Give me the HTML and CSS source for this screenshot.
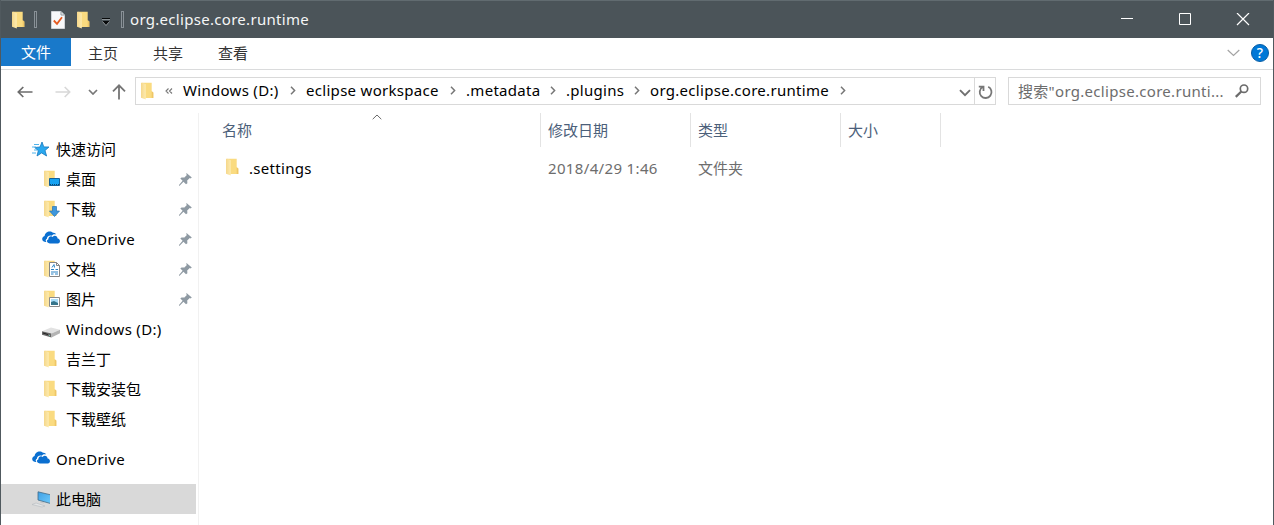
FILE: index.html
```html
<!DOCTYPE html>
<html lang="zh-CN">
<head>
<meta charset="utf-8">
<title>org.eclipse.core.runtime</title>
<link rel="stylesheet" href="styles.css">
</head>
<body>
<svg class="defs" width="0" height="0" aria-hidden="true">
  <linearGradient id="gold" x1="0" x2="1"><stop offset="0" stop-color="#f5d78a"/><stop offset="1" stop-color="#fdebb0"/></linearGradient>
  <linearGradient id="screen" x1="0" y1="0" x2="1" y2="1"><stop offset="0" stop-color="#3f9fe4"/><stop offset="1" stop-color="#6cc9fb"/></linearGradient>
  <symbol id="folder" viewBox="0 0 18 18">
    <path d="M1 .7h9.700v8.500l1.600 1.300V16H2z" fill="#fadb80"/>
    <path d="M0 .7h1.200l3.600 1.600v15.200L3.500 17 0 15.800z" fill="url(#gold)"/>
    <path d="M10.700 9.300l1.600 1.200V16h-1.600z" fill="#efc667"/>
  </symbol>
  <symbol id="cloud" viewBox="0 0 18 13">
    <path d="M4.500 10.900H3.300C-.6 10.500-.8 6 2.600 5.100 2.800 1.300 7.800-1.300 11 1.700c1.400-.3 2.700.5 3 1.800-2-.4-3.200.2-4.100 1.200C7 4 4.900 5.500 4.900 7.800c-1.500.7-1.600 2.200-.4 3.100z" fill="#0a6fd0"/>
    <path d="M7.800 12.400C4.200 12.200 4.500 8.700 6.300 8.400 6.400 5.600 9 4.600 10.600 5.900c1.700-2.200 5-1 5 1.700 3.100.3 3.100 4.700.2 4.800z" fill="#0a6fd0"/>
  </symbol>
  <symbol id="pin" viewBox="0 0 13 13">
    <path d="M7.800.2L12.800 4.600l-1.200.8-.8-.3-2.600 2.500.2 2.600-1.400 1L4.500 8.800.6 12.700H0v-.6l3.600-4.400-2.300-2.300 1.200-1 2.900.1L7.900 1.900 7 .8z" fill="#8f9aa3"/>
  </symbol>
  <symbol id="sep" viewBox="0 0 6 9"><path d="M1 .8l3.600 3.700L1 8.200" fill="none" stroke="#777" stroke-width="1.500"/></symbol>
</svg>
<div class="window">
  <header class="titlebar">
    <svg class="t-folder"><use href="#folder"/></svg>
    <i class="grip"></i>
    <svg class="t-check" viewBox="0 0 14 18"><path d="M.5.500h9.500l3.500 3.500v13.500H.5z" fill="#f7f8fa" stroke="#cfd3d7"/><path d="M10 .5V4h3.500" fill="none" stroke="#8d969c"/><path d="M2.800 9.500l3.200 3.300 5-6.600" fill="none" stroke="#e55a20" stroke-width="1.800"/></svg>
    <svg class="t-folder2"><use href="#folder"/></svg>
    <svg class="t-menu" viewBox="0 0 8 8"><path d="M0 0h8v1H0zM.5 3h7L4 7z" fill="#080a0b"/><path d="M0 1.500h8M.5 3.500l3.500 4 3.500-4" fill="none" stroke="#a9afb2" stroke-width=".7"/></svg>
    <i class="grip grip2"></i>
    <h1 class="lat">org.eclipse.core.runtime</h1>
    <div class="controls">
      <svg viewBox="0 0 14 14"><path d="M1 5.500h12" stroke="#fff"/></svg>
      <svg viewBox="0 0 14 14"><path d="M1.500.500h11v11h-11z" fill="none" stroke="#fff"/></svg>
      <svg viewBox="0 0 14 14"><path d="M1 0l12 12M13 0L1 12" stroke="#fff" stroke-width="1.200"/></svg>
    </div>
  </header>
  <nav class="ribbon">
    <span class="tab active">文件</span><span class="tab">主页</span><span class="tab">共享</span><span class="tab">查看</span>
    <svg class="expand" viewBox="0 0 13 8"><path d="M.7 1l5.800 5.500L12.300 1" fill="none" stroke="#a4a4a4" stroke-width="1.200"/></svg>
    <span class="help">?</span>
  </nav>
  <div class="toolbar">
    <div class="history">
      <svg class="back" viewBox="0 0 16 12"><path d="M15.500 6H1.500M6.300 1L1.300 6l5 5" fill="none" stroke="#6c6c6c" stroke-width="1.700"/></svg>
      <svg class="forward" viewBox="0 0 16 12"><path d="M.5 6h14M9.700 1l5 5-5 5" fill="none" stroke="#d8d8d8" stroke-width="1.600"/></svg>
      <svg class="recent" viewBox="0 0 10 6"><path d="M1 1l4 4 4-4" fill="none" stroke="#777" stroke-width="1.700"/></svg>
      <svg class="up" viewBox="0 0 14 16"><path d="M7 15.500V1.500M1 7.300l6-6 6 6" fill="none" stroke="#757575" stroke-width="1.800"/></svg>
    </div>
    <div class="address">
      <svg class="a-folder"><use href="#folder"/></svg>
      <svg class="more" viewBox="0 0 8 6"><path d="M3.500.5L1 3l2.500 2.500M7 .5L4.500 3 7 5.500" fill="none" stroke="#777" stroke-width="1.100"/></svg>
      <span class="crumb lat c1">Windows (D:)</span><svg class="sep"><use href="#sep"/></svg>
      <span class="crumb lat c2">eclipse workspace</span><svg class="sep"><use href="#sep"/></svg>
      <span class="crumb lat c3">.metadata</span><svg class="sep"><use href="#sep"/></svg>
      <span class="crumb lat c4">.plugins</span><svg class="sep"><use href="#sep"/></svg>
      <span class="crumb lat c5">org.eclipse.core.runtime</span><svg class="sep"><use href="#sep"/></svg>
      <svg class="drop" viewBox="0 0 12 8"><path d="M1 1.200l5 5 5-5" fill="none" stroke="#707070" stroke-width="1.900"/></svg>
      <span class="refresh"><svg viewBox="0 0 15 16"><path d="M10.200 2.800a5.900 5.900 0 1 1-5.700.3M5.500 7V2.700H.8" fill="none" stroke="#777" stroke-width="1.800"/></svg></span>
    </div>
    <div class="search"><span class="lat">搜索"org.eclipse.core.runti...</span>
      <svg viewBox="0 0 14 14"><circle cx="9" cy="4.700" r="3.700" fill="none" stroke="#6b6b6b" stroke-width="1.700"/><path d="M6.300 7.500L.8 12.900" stroke="#6b6b6b" stroke-width="2.200"/></svg>
    </div>
  </div>
  <main class="content">
    <aside class="sidebar">
      <div class="item root"><svg class="ico" viewBox="0 0 18 18"><path d="M10 2l1.800 4.900 5.200.1-4 3.500 1.600 5.500-5-3.100L5 16l1.300-5.300L2.700 7.500 8 7z" fill="#29a8ef" stroke="#1777bd" stroke-width=".8"/><path d="M2 4.500h5M0 7h4M2 10h3M0 13h4" stroke="#4fb3ec"/></svg><span>快速访问</span></div>
      <div class="item"><svg class="ico" viewBox="0 0 18 18"><use href="#folder" x="2" width="18" height="18"/><path d="M7.500 8.500h10v7h-10z" fill="#16a2f2" stroke="#146098"/><path d="M8 14.500h9" stroke="#0b486f" stroke-dasharray="1 1"/></svg><span>桌面</span><svg class="pin"><use href="#pin"/></svg></div>
      <div class="item"><svg class="ico" viewBox="0 0 18 18"><use href="#folder" x="2" width="18" height="18"/><path d="M10.500 6.500h4V11h3L12.500 16.500 7.500 11h3z" fill="#3f97dc" stroke="#2674b5" stroke-width=".7"/></svg><span>下载</span><svg class="pin"><use href="#pin"/></svg></div>
      <div class="item"><svg class="ico cloud"><use href="#cloud"/></svg><span class="lat">OneDrive</span><svg class="pin"><use href="#pin"/></svg></div>
      <div class="item"><svg class="ico" viewBox="0 0 18 18"><use href="#folder" x="2" width="18" height="18"/><path d="M7.500 2.500h7l3 3v11h-10z" fill="#fff" stroke="#858585"/><path d="M14.500 2.500v3h3" fill="none" stroke="#858585"/><path d="M9 9.500h3M13.500 9.500H16M9 12h7M9 14h2.500M13 14h3M10 7.500l2-3 .5 3" fill="none" stroke="#2a83c4"/></svg><span>文档</span><svg class="pin"><use href="#pin"/></svg></div>
      <div class="item"><svg class="ico" viewBox="0 0 18 18"><use href="#folder" x="2" width="18" height="18"/><path d="M7.500 7.500h10v9h-10z" fill="#fff" stroke="#8b8b8b"/><path d="M9 9h7v6H9z" fill="#a8dcf7"/><path d="M9 12l3-1 4 2v2H9z" fill="#36758b"/></svg><span>图片</span><svg class="pin"><use href="#pin"/></svg></div>
      <div class="item"><svg class="ico" viewBox="0 0 18 18"><path d="M0 11.200L9 7.500l9 2.300-8.500 3.700z" fill="#e2e2e2"/><path d="M0 11.200l9.500 2.300v4L0 14.800z" fill="#666"/><path d="M9.500 13.500l8.500-3.700v3.400l-8.500 4.300z" fill="#b4b4b4"/><path d="M1 13l5 1.500" stroke="#222"/><path d="M7 15.500h1" stroke="#75c2ab"/></svg><span class="lat">Windows (D:)</span></div>
      <div class="item"><svg class="ico" viewBox="0 0 18 18"><use href="#folder" x="2" width="18" height="18"/></svg><span>吉兰丁</span></div>
      <div class="item"><svg class="ico" viewBox="0 0 18 18"><use href="#folder" x="2" width="18" height="18"/></svg><span>下载安装包</span></div>
      <div class="item"><svg class="ico" viewBox="0 0 18 18"><use href="#folder" x="2" width="18" height="18"/></svg><span>下载壁纸</span></div>
      <div class="item root gap"><svg class="ico cloud"><use href="#cloud"/></svg><span class="lat">OneDrive</span></div>
      <div class="item root gap selected"><svg class="ico" viewBox="0 0 18 18"><path d="M6 1.800l12.500 3v8.700L6 10z" fill="url(#screen)" stroke="#446b86" stroke-width=".8"/><path d="M8 12l4 1M0 14.500l4-1.500 9 3-3 1z" fill="#e3e5e6" stroke="#b5bbc0" stroke-width=".6"/></svg><span>此电脑</span></div>
    </aside>
    <section class="files">
      <div class="row head">
        <span class="name">名称<svg class="sort" viewBox="0 0 10 6"><path d="M.7 5.200L5 1l4.300 4.200" fill="none" stroke="#6a6a6a"/></svg></span><span class="col">修改日期</span><span class="col">类型</span><span class="col size">大小</span>
      </div>
      <div class="row file">
        <span class="name"><svg class="f-folder"><use href="#folder"/></svg><b class="lat">.settings</b></span><span class="col date">2018/4/29 1:46</span><span class="col">文件夹</span>
      </div>
    </section>
  </main>
</div>
</body>
</html>
```
FILE: styles.css
```css
* { box-sizing: border-box; }
body { margin: 0; font: 15px/20px "Noto Sans", "Noto Sans CJK SC", sans-serif; color: #000; overflow: hidden; }
svg { display: block; flex: none; }
.lat { letter-spacing: .3px; }
.defs { position: absolute; }
.window { width: 1274px; height: 525px; background: #fff; border: solid #50595e; border-width: 0 1px; display: flex; flex-direction: column; }
.titlebar { height: 38px; flex: none; background: #4b5459; border-top: 1px solid #616b70; display: flex; align-items: center; padding-left: 11px; color: #fff; }
.t-folder, .t-folder2 { width: 18px; height: 18px; }
.grip { width: 3px; height: 17px; border: 1px solid #899197; margin-left: 4px; margin-bottom: 1px; flex: none; }
.t-check { width: 14px; height: 18px; margin-left: 14px; }
.t-folder2 { margin-left: 12px; }
.t-menu { width: 8px; height: 8px; margin: 4px 0 0 7px; }
.grip2 { margin-left: 11px; }
h1 { margin: 0 0 2px 6px; font-size: 15px; font-weight: 400; color: #f5f6f6; white-space: nowrap; }
.controls { margin-left: auto; display: flex; gap: 44px; padding-right: 23px; }
.controls svg { width: 14px; height: 14px; }
.ribbon { height: 32px; flex: none; border-bottom: 1px solid #dadbdc; display: flex; align-items: center; padding-bottom: 1px; font-family: "Noto Sans CJK SC", sans-serif; color: #333; }
.tab { width: 65px; height: 30px; line-height: 30px; padding-right: 1px; text-align: center; }
.tab.active { width: 70px; height: 28px; line-height: 28px; padding: 0; background: #1979ca; color: #fff; align-self: flex-start; }
.expand { width: 13px; height: 8px; margin-left: auto; }
.help { width: 18px; height: 18px; margin: 0 4px 0 11px; border-radius: 50%; background: #0078d7; border: 1px solid #075ea6; color: #fff; font: 500 14px/16px "Noto Sans", sans-serif; text-align: center; }
.toolbar { height: 43px; flex: none; display: flex; align-items: flex-start; padding-top: 7px; }
.history { width: 134px; height: 28px; display: flex; align-items: center; padding: 2px 0 0 16px; }
.back, .forward { width: 16px; height: 12px; }
.forward { margin-left: 22px; }
.recent { width: 10px; height: 6px; margin-left: 17px; }
.up { width: 14px; height: 16px; margin-left: 14px; }
.address { width: 861px; height: 28px; border: 1px solid #d9d9d9; display: flex; align-items: center; }
.a-folder { width: 18px; height: 18px; margin-left: 5px; margin-bottom: 1px; }
.more { width: 8px; height: 6px; margin: 0 10px 0 6px; }
.crumb { white-space: nowrap; flex: none; margin-bottom: 2px; }
.sep { width: 6px; height: 9px; margin-bottom: 1px; }
.c1 { width: 107px; } .c2 { width: 144px; } .c3 { width: 84px; } .c4 { width: 68px; } .c5 { width: 190px; }
.sep + .crumb { margin-left: 10px; }
.drop { width: 12px; height: 8px; margin: 3px 3px 0 auto; }
.refresh { width: 21px; height: 26px; border-left: 1px solid #d9d9d9; display: grid; place-items: center; }
.refresh svg { width: 15px; height: 16px; margin-top: 2px; }
.search { width: 253px; height: 28px; margin-left: 12px; border: 1px solid #d9d9d9; display: flex; align-items: center; justify-content: space-between; padding: 0 11px 0 9px; color: #6d6d6d; white-space: nowrap; }
.search svg { width: 14px; height: 14px; }
.content { flex: 1; display: flex; min-height: 0; }
.sidebar { width: 198px; flex: none; border-right: 1px solid #f1f1f1; padding: 21px 2px 0 0; }
.item { height: 30px; display: flex; align-items: center; padding-left: 41px; white-space: nowrap; }
.item.root { padding-left: 31px; }
.item.gap { margin-top: 10px; }
.item .ico { width: 18px; height: 18px; margin-right: 6px; }
.item .cloud { height: 13px; margin-bottom: 3px; }
.item .pin { width: 13px; height: 13px; margin: 0 4px 0 auto; }
.selected { background: #d9d9d9; }
.files { flex: 1; }
.row { display: flex; align-items: center; }
.head { height: 34px; color: #4c607a; }
.name { width: 341px; flex: none; display: flex; align-items: center; padding-left: 23px; }
.sort { width: 10px; height: 6px; margin: 0 0 26px 120px; }
.col { width: 150px; height: 34px; line-height: 34px; padding-left: 7px; border-left: 1px solid #e3e3e3; }
.size { width: 101px; border-right: 1px solid #e3e3e3; }
.file { margin-top: 4px; color: #6d6d6d; }
.file .col { border-color: transparent; }
.date { letter-spacing: .35px; }
.f-folder { width: 18px; height: 18px; margin: 0 4px 2px 4px; }
.name b { font-weight: 400; color: #000; margin-left: 1px; }
```
